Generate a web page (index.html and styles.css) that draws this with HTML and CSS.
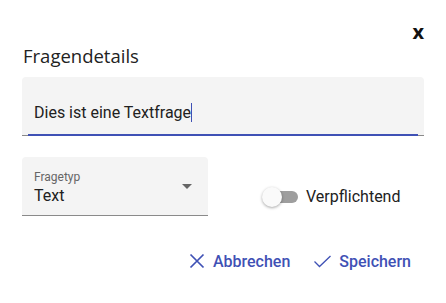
FILE: index.html
```html
<!DOCTYPE html>
<html lang="de">
<head>
  <meta charset="UTF-8">
  <title>Fragendetails</title>
  <link rel="stylesheet" href="styles.css">
</head>
<body>

  <div class="dialog">
    <div class="dialog-top">
      <button class="close-button">x</button>
    </div>

    <h2 class="dialog-title">Fragendetails</h2>

    <div class="field text-field">
      <span class="field-value">Dies ist eine Textfrage<span class="caret"></span></span>
      <span class="field-line"></span>
    </div>

    <div class="options-row">
      <div class="field select-field">
        <div class="select-inner">
          <span class="field-label">Fragetyp</span>
          <span class="select-value">Text</span>
        </div>
        <span class="select-arrow"></span>
      </div>

      <label class="toggle">
        <span class="toggle-track"><span class="toggle-thumb"></span></span>
        <span class="toggle-label">Verpflichtend</span>
      </label>
    </div>

    <div class="dialog-actions">
      <button class="action-button">
        <svg width="24" height="24" viewBox="0 0 24 24"><path d="M5.5 5.5l13 13M18.5 5.5l-13 13" fill="none" stroke="currentColor" stroke-width="1.7"/></svg>
        Abbrechen
      </button>
      <button class="action-button">
        <svg width="24" height="24" viewBox="0 0 24 24"><path d="M3.5 12.5l5 5L19.5 7" fill="none" stroke="currentColor" stroke-width="1.3"/></svg>
        Speichern
      </button>
    </div>
  </div>

</body>
</html>
```

FILE: styles.css
```css
body {
  margin: 0;
  background-color: #ffffff;
  font-family: Roboto, "Noto Sans", sans-serif;
  color: #212121;
}

.dialog {
  padding: 22px 22px 0 22px;
}

.dialog-top {
  display: flex;
  justify-content: flex-end;
  height: 20px;
}

.close-button {
  border: none;
  background: none;
  padding: 0;
  font-family: "Open Sans", sans-serif;
  font-weight: bold;
  font-size: 20px;
  line-height: 18px;
  color: #111;
  cursor: pointer;
}

.dialog-title {
  margin: 1px 0 8px 1px;
  font-family: "Open Sans", sans-serif;
  font-weight: normal;
  font-size: 18.5px;
  line-height: 26px;
  color: #222;
}

/* Eingabefelder */
.field {
  position: relative;
  background-color: #f4f4f4;
  border-radius: 4px 4px 0 0;
  border-bottom: 1px solid #8a8a8a;
  box-sizing: border-box;
}

.text-field {
  height: 59px;
  padding: 25px 12px 0 12px;
}

.field-value {
  font-size: 16px;
  line-height: 22px;
}

.caret {
  display: inline-block;
  width: 1px;
  height: 19px;
  background-color: #3f51b5;
  vertical-align: -4px;
}

.field-line {
  position: absolute;
  left: 6px;
  right: 6px;
  bottom: -1px;
  height: 2px;
  background-color: #3f51b5;
}

.options-row {
  display: flex;
  align-items: center;
  margin-top: 21px;
}

.select-field {
  width: 186px;
  height: 59px;
  padding: 13px 12px 0 12px;
  display: flex;
  justify-content: space-between;
}

.select-inner {
  display: flex;
  flex-direction: column;
}

.field-label {
  font-size: 12px;
  line-height: 14px;
  color: #666;
}

.select-value {
  font-size: 16px;
  line-height: 24px;
}

.select-arrow {
  margin-top: 14px;
  margin-right: 4px;
  width: 0;
  height: 0;
  border-left: 5px solid transparent;
  border-right: 5px solid transparent;
  border-top: 5px solid #666;
}

/* Schalter */
.toggle {
  display: flex;
  align-items: center;
  margin-left: 56px;
  margin-top: 20px;
  cursor: pointer;
}

.toggle-track {
  position: relative;
  width: 34px;
  height: 12px;
  border-radius: 6px;
  background-color: #9e9e9e;
}

.toggle-thumb {
  position: absolute;
  left: -2px;
  top: -4px;
  width: 20px;
  height: 20px;
  border-radius: 50%;
  background-color: #fafafa;
  box-shadow: 0 1px 3px rgba(0, 0, 0, 0.35);
}

.toggle-label {
  margin-left: 8px;
  font-size: 16px;
}

/* Aktionen */
.dialog-actions {
  display: flex;
  justify-content: flex-end;
  gap: 5px;
  margin-top: 27px;
  margin-right: 5px;
}

.action-button {
  display: flex;
  align-items: center;
  gap: 4px;
  border: none;
  background: none;
  padding: 0 8px;
  height: 36px;
  font-family: Roboto, sans-serif;
  font-weight: 500;
  font-size: 16px;
  color: #3f51b5;
  cursor: pointer;
}
```
